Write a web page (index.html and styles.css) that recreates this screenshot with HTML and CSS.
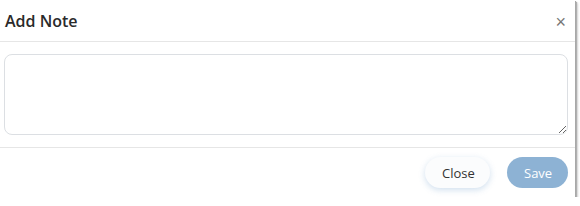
FILE: index.html
```html
<!DOCTYPE html>
<html lang="en">
<head>
    <meta charset="UTF-8">
    <meta name="viewport" content="width=device-width, initial-scale=1.0">
    <title>Add Note</title>
    <link rel="stylesheet" href="styles.css">
</head>
<body>
    <div class="modal">
        <div class="modal-header">
            <h5 class="modal-title">Add Note</h5>
            <button class="close-x" type="button" aria-label="Close">&times;</button>
        </div>
        <div class="modal-body">
            <textarea class="note-input" id="noteText"></textarea>
        </div>
        <div class="modal-footer">
            <button class="btn btn-light" type="button">Close</button>
            <button class="btn btn-save" type="button">Save</button>
        </div>
    </div>
</body>
</html>
```

FILE: styles.css
```css
body {
    font-family: "Open Sans", "Noto Sans", sans-serif;
    margin: 0;
    background-color: #fff;
}
.modal {
    width: 575px;
    height: 197px;
    background-color: #fff;
    box-shadow: 1px 1px 0 #a8a8a8, 2px 2px 1px #b0b0b0, 3px 3px 2px rgba(0, 0, 0, 0.15);
    display: flex;
    flex-direction: column;
}
.modal-header {
    height: 41px;
    display: flex;
    align-items: center;
    justify-content: space-between;
    padding: 0 9px 0 5px;
    border-bottom: 1px solid #e6e6e6;
}
.modal-title {
    margin: 0;
    font-size: 16px;
    font-weight: 600;
    color: #2a2a2a;
}
.close-x {
    border: none;
    background: none;
    padding: 0;
    font-size: 18px;
    line-height: 1;
    color: #777;
    margin-top: 2px;
}
.modal-body {
    padding: 12px 7px 12px 4px;
    border-bottom: 1px solid #e6e6e6;
}
.note-input {
    display: block;
    width: 100%;
    height: 81px;
    box-sizing: border-box;
    border: 1px solid #dcdfe3;
    border-radius: 8px;
    resize: vertical;
}
.modal-footer {
    flex: 1;
    display: flex;
    align-items: center;
    justify-content: flex-end;
    gap: 17px;
    padding: 0 7px 0 0;
}
.btn {
    height: 31px;
    border: none;
    border-radius: 16px;
    font-family: "Open Sans", "Noto Sans", sans-serif;
    font-size: 13px;
    padding: 0 17px;
}
.btn-light {
    width: 65px;
    background-color: #fbfcfd;
    color: #333;
    box-shadow: 0 2px 6px rgba(100, 150, 200, 0.3);
}
.btn-save {
    width: 61px;
    background-color: #8db2d4;
    color: #fff;
}
```
